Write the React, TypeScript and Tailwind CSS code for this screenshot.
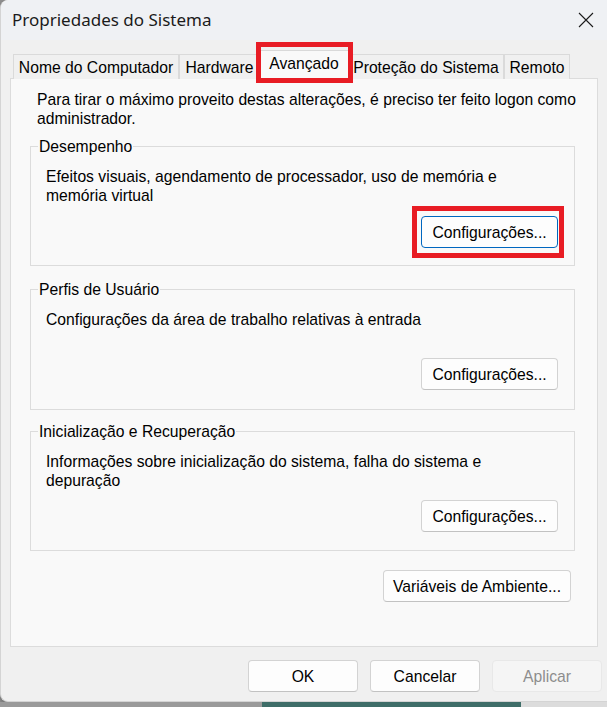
import type { ReactNode } from 'react';

const body = "font-['Liberation_Sans',Arial,sans-serif] text-[15.7px] leading-[19px]";

const Button = ({
  children,
  className = '',
  focused = false,
  disabled = false,
}: {
  children: ReactNode;
  className?: string;
  focused?: boolean;
  disabled?: boolean;
}) => (
  <button
    disabled={disabled}
    className={`h-[32px] rounded-[4px] border ${body} ${
      disabled
        ? 'bg-[#f5f5f5] border-[#e8e8e8] text-[#8d8d8d]'
        : focused
          ? 'bg-[#fdfdfd] border-[#0067c0] text-black'
          : 'bg-[#fdfdfd] border-[#d3d3d3] border-b-[#c2c2c2] text-black'
    } ${className}`}
  >
    {children}
  </button>
);

const Tab = ({ label, width, selected = false }: { label: string; width: string; selected?: boolean }) =>
  selected ? (
    <div className={`relative z-10 -mx-[2px] h-[29px] ${width} border border-b-0 border-[#d9d9d9] bg-[#f9f9f9] flex items-start justify-center pt-[3px] text-black ${body}`}>
      {label}
      {/* red annotation */}
      <div className="pointer-events-none absolute -left-[3px] -right-[4px] -top-[9px] -bottom-[4px] border-[5px] border-[#e81c24]" />
    </div>
  ) : (
    <div className={`h-[25px] ${width} border border-b-0 border-[#dadada] bg-[#f0f0f0] flex items-center justify-center text-black ${body}`}>
      {label}
    </div>
  );

const Group = ({
  title,
  text,
  className,
  rowClass,
  focused = false,
}: {
  title: string;
  text: ReactNode;
  className: string;
  rowClass: string;
  focused?: boolean;
}) => (
  <fieldset className={`ml-[19px] mr-[22px] border border-[#dcdcdc] pl-[15px] pr-[16px] ${className}`}>
    <legend className={`-ml-[8px] px-[1px] text-black ${body}`}>{title}</legend>
    <div className={`h-[38px] text-black ${body}`}>{text}</div>
    <div className={`flex justify-end ${rowClass}`}>
      <div className="relative">
        <Button className="w-[137px]" focused={focused}>
          Configurações...
        </Button>
        {focused && (
          <div className="pointer-events-none absolute -left-[9px] -right-[6px] -top-[10px] -bottom-[10px] border-[5px] border-[#e81c24]" />
        )}
      </div>
    </div>
  </fieldset>
);

export default function App() {
  return (
    <div className="w-[607px] h-[707px] overflow-hidden bg-[#8f8f8f] flex flex-col">
      <div className="h-[702px] w-[607px] shrink-0 bg-[#f0f0f0] rounded-tl-[8px] rounded-bl-[8px] border-l border-b border-[#d4d4d4] flex flex-col shadow-[0_2px_4px_rgba(0,0,0,0.25)]">
        {/* title bar */}
        <div className="h-[40px] shrink-0 flex items-center justify-between pl-[11px] pr-[13px] bg-[#eff1f4] rounded-tl-[8px]">
          <span className="font-['Noto_Sans','Open_Sans',sans-serif] text-[17px] text-[#1b1b1b]">Propriedades do Sistema</span>
          <svg width="16" height="16" viewBox="0 0 16 16" className="text-[#1b1b1b]">
            <path d="M1 1 L15 15 M15 1 L1 15" stroke="currentColor" strokeWidth="1.1" fill="none" />
          </svg>
        </div>

        <div className="flex-1 flex flex-col px-[9px] pt-[10px]">
          {/* tabs */}
          <div className="relative z-10 -mb-px flex items-end h-[29px] pl-[3px]">
            <Tab label="Nome do Computador" width="w-[166px]" />
            <Tab label="Hardware" width="w-[81px]" />
            <Tab label="Avançado" width="w-[92px]" selected />
            <Tab label="Proteção do Sistema" width="w-[156px]" />
            <Tab label="Remoto" width="w-[66px]" />
          </div>

          {/* panel */}
          <div className="h-[569px] border border-[#dcdcdc] bg-[#f9f9f9] flex flex-col">
            <p className={`pl-[26px] pr-[10px] pt-[11px] text-black ${body}`}>
              Para tirar o máximo proveito destas alterações, é preciso ter feito logon como administrador.
            </p>

            <Group
              title="Desempenho"
              text={<>Efeitos visuais, agendamento de processador, uso de memória e<br />memória virtual</>}
              className="mt-[9px] pt-[11px] pb-[17px]"
              rowClass="mt-[11px]"
              focused
            />
            <Group
              title="Perfis de Usuário"
              text="Configurações da área de trabalho relativas à entrada"
              className="mt-[14px] pt-[11px] pb-[19px]"
              rowClass="mt-[10px]"
            />
            <Group
              title="Inicialização e Recuperação"
              text={<>Informações sobre inicialização do sistema, falha do sistema e<br />depuração</>}
              className="mt-[12px] pt-[11px] pb-[18px]"
              rowClass="mt-[10px]"
            />

            <div className="flex justify-end mt-[19px] pr-[26px]">
              <Button className="w-[188px]">Variáveis de Ambiente...</Button>
            </div>
          </div>

          {/* dialog buttons */}
          <div className="flex justify-end gap-[12px] mt-[13px] -mr-[4px]">
            <Button className="w-[110px]">OK</Button>
            <Button className="w-[110px]">Cancelar</Button>
            <Button className="w-[110px]" disabled>
              Aplicar
            </Button>
          </div>
        </div>
      </div>

      {/* desktop behind the dialog */}
      <div className="flex-1 flex">
        <div className="w-[262px] bg-[#9a9a9a]" />
        <div className="w-[259px] bg-[#3e6d68]" />
        <div className="flex-1 bg-[#dcdcdc]" />
      </div>
    </div>
  );
}
